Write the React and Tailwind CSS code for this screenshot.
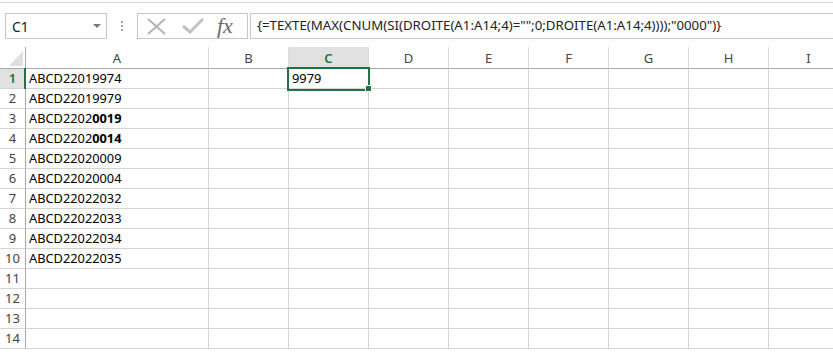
import React from "react";

const COLS = ["A", "B", "C", "D", "E", "F", "G", "H", "I"];

const ROWS = [
  ["ABCD22019974"],
  ["ABCD22019979"],
  ["ABCD2202", "0019"],
  ["ABCD2202", "0014"],
  ["ABCD22020009"],
  ["ABCD22020004"],
  ["ABCD22022032"],
  ["ABCD22022033"],
  ["ABCD22022034"],
  ["ABCD22022035"],
  [],
  [],
  [],
  [],
];

const FORMULA = '{=TEXTE(MAX(CNUM(SI(DROITE(A1:A14;4)="";0;DROITE(A1:A14;4))));"0000")}';

function FormulaBar() {
  return (
    <div className="flex h-[26px] items-stretch">
      <div className="relative ml-[5px] flex w-[102px] shrink-0 items-center border border-[#c6c6c6] pl-[6px] text-[14px] text-[#222]">
        C1
        <svg className="absolute right-[5px] top-[10px]" width="8" height="5" viewBox="0 0 8 5">
          <polygon points="0,0 8,0 4,4" fill="#777" />
        </svg>
      </div>
      <div className="flex w-[30px] shrink-0 flex-col items-center justify-center gap-[2px]">
        <span className="h-[2px] w-[2px] bg-[#a6a6a6]" />
        <span className="h-[2px] w-[2px] bg-[#a6a6a6]" />
        <span className="h-[2px] w-[2px] bg-[#a6a6a6]" />
      </div>
      <div className="flex w-[111px] shrink-0 items-center border border-[#c6c6c6]">
        <svg className="ml-[9px] shrink-0" width="19" height="17" viewBox="0 0 19 17">
          <path d="M1 1 L18 16 M18 1 L1 16" stroke="#b4b4b4" strokeWidth="2" fill="none" />
        </svg>
        <svg className="ml-[16px] shrink-0" width="22" height="16" viewBox="0 0 22 16">
          <path d="M1 8 L8 14 L21 1" stroke="#c2c2c2" strokeWidth="3" fill="none" />
        </svg>
        <span
          className="ml-[13px] text-[22px] italic leading-none text-[#6a6a6a]"
          style={{ fontFamily: '"Liberation Serif", serif' }}
        >
          fx
        </span>
      </div>
      <div className="ml-[2px] flex w-[620px] shrink-0 items-center whitespace-nowrap border border-[#c6c6c6] pl-[6px] text-[13.25px] text-[#222]">
        {FORMULA}
      </div>
    </div>
  );
}

function Grid() {
  return (
    <div className="relative grid grid-cols-[26px_183px_repeat(8,80px)]">
      {/* header row */}
      <div className="relative h-[22px] border-r border-b border-r-[#ababab] border-b-[#ababab]">
        <svg className="absolute bottom-[2px] right-[2px]" width="14" height="15" viewBox="0 0 14 15">
          <polygon points="14,0 14,15 0,15" fill="#dfdfdf" />
        </svg>
      </div>
      {COLS.map((c) => (
        <div
          key={c}
          className={
            "flex h-[22px] items-center justify-center border-r border-b border-r-[#dadada] border-b-[#ababab] pt-[2px] text-[13px] " +
            (c === "C" ? "bg-[#e1e1e1] font-semibold text-[#217346]" : "text-[#444]")
          }
        >
          {c}
        </div>
      ))}

      {ROWS.map((r, i) => (
        <React.Fragment key={i}>
          <div
            className={
              "flex h-[20px] items-center justify-center border-r border-b border-r-[#ababab] border-b-[#d4d4d4] text-[13px] " +
              (i === 0 ? "bg-[#e1e1e1] font-semibold text-[#217346]" : "text-[#444]")
            }
          >
            {i + 1}
          </div>
          {COLS.map((c) => (
            <div
              key={c}
              className="flex h-[20px] items-center overflow-hidden whitespace-nowrap border-r border-b border-[#d4d4d4] pl-[3px] text-[12.8px] text-black"
            >
              {c === "A" && r.length > 0 && (
                <>
                  {r[0]}
                  {r[1] && <b>{r[1]}</b>}
                </>
              )}
              {c === "C" && i === 0 && "9979"}
            </div>
          ))}
        </React.Fragment>
      ))}

      {/* active row header marker */}
      <div className="absolute left-[24px] top-[21px] h-[21px] w-[2px] bg-[#217346]" />
      {/* selection */}
      <div className="absolute left-[287px] top-[20px] h-[24px] w-[83px] border-2 border-[#217346]" />
      <div className="absolute left-[365px] top-[38px] h-[7px] w-[7px] border border-white bg-[#217346]" />
    </div>
  );
}

export default function App() {
  return (
    <div
      className="h-[354px] w-[833px] overflow-hidden bg-white"
      style={{ fontFamily: '"Noto Sans", "Open Sans", sans-serif' }}
    >
      <div className="h-[2px]" />
      <div className="h-px bg-[#dadada]" />
      <div className="h-[10px]" />
      <FormulaBar />
      <div className="h-[8px]" />
      <Grid />
    </div>
  );
}
